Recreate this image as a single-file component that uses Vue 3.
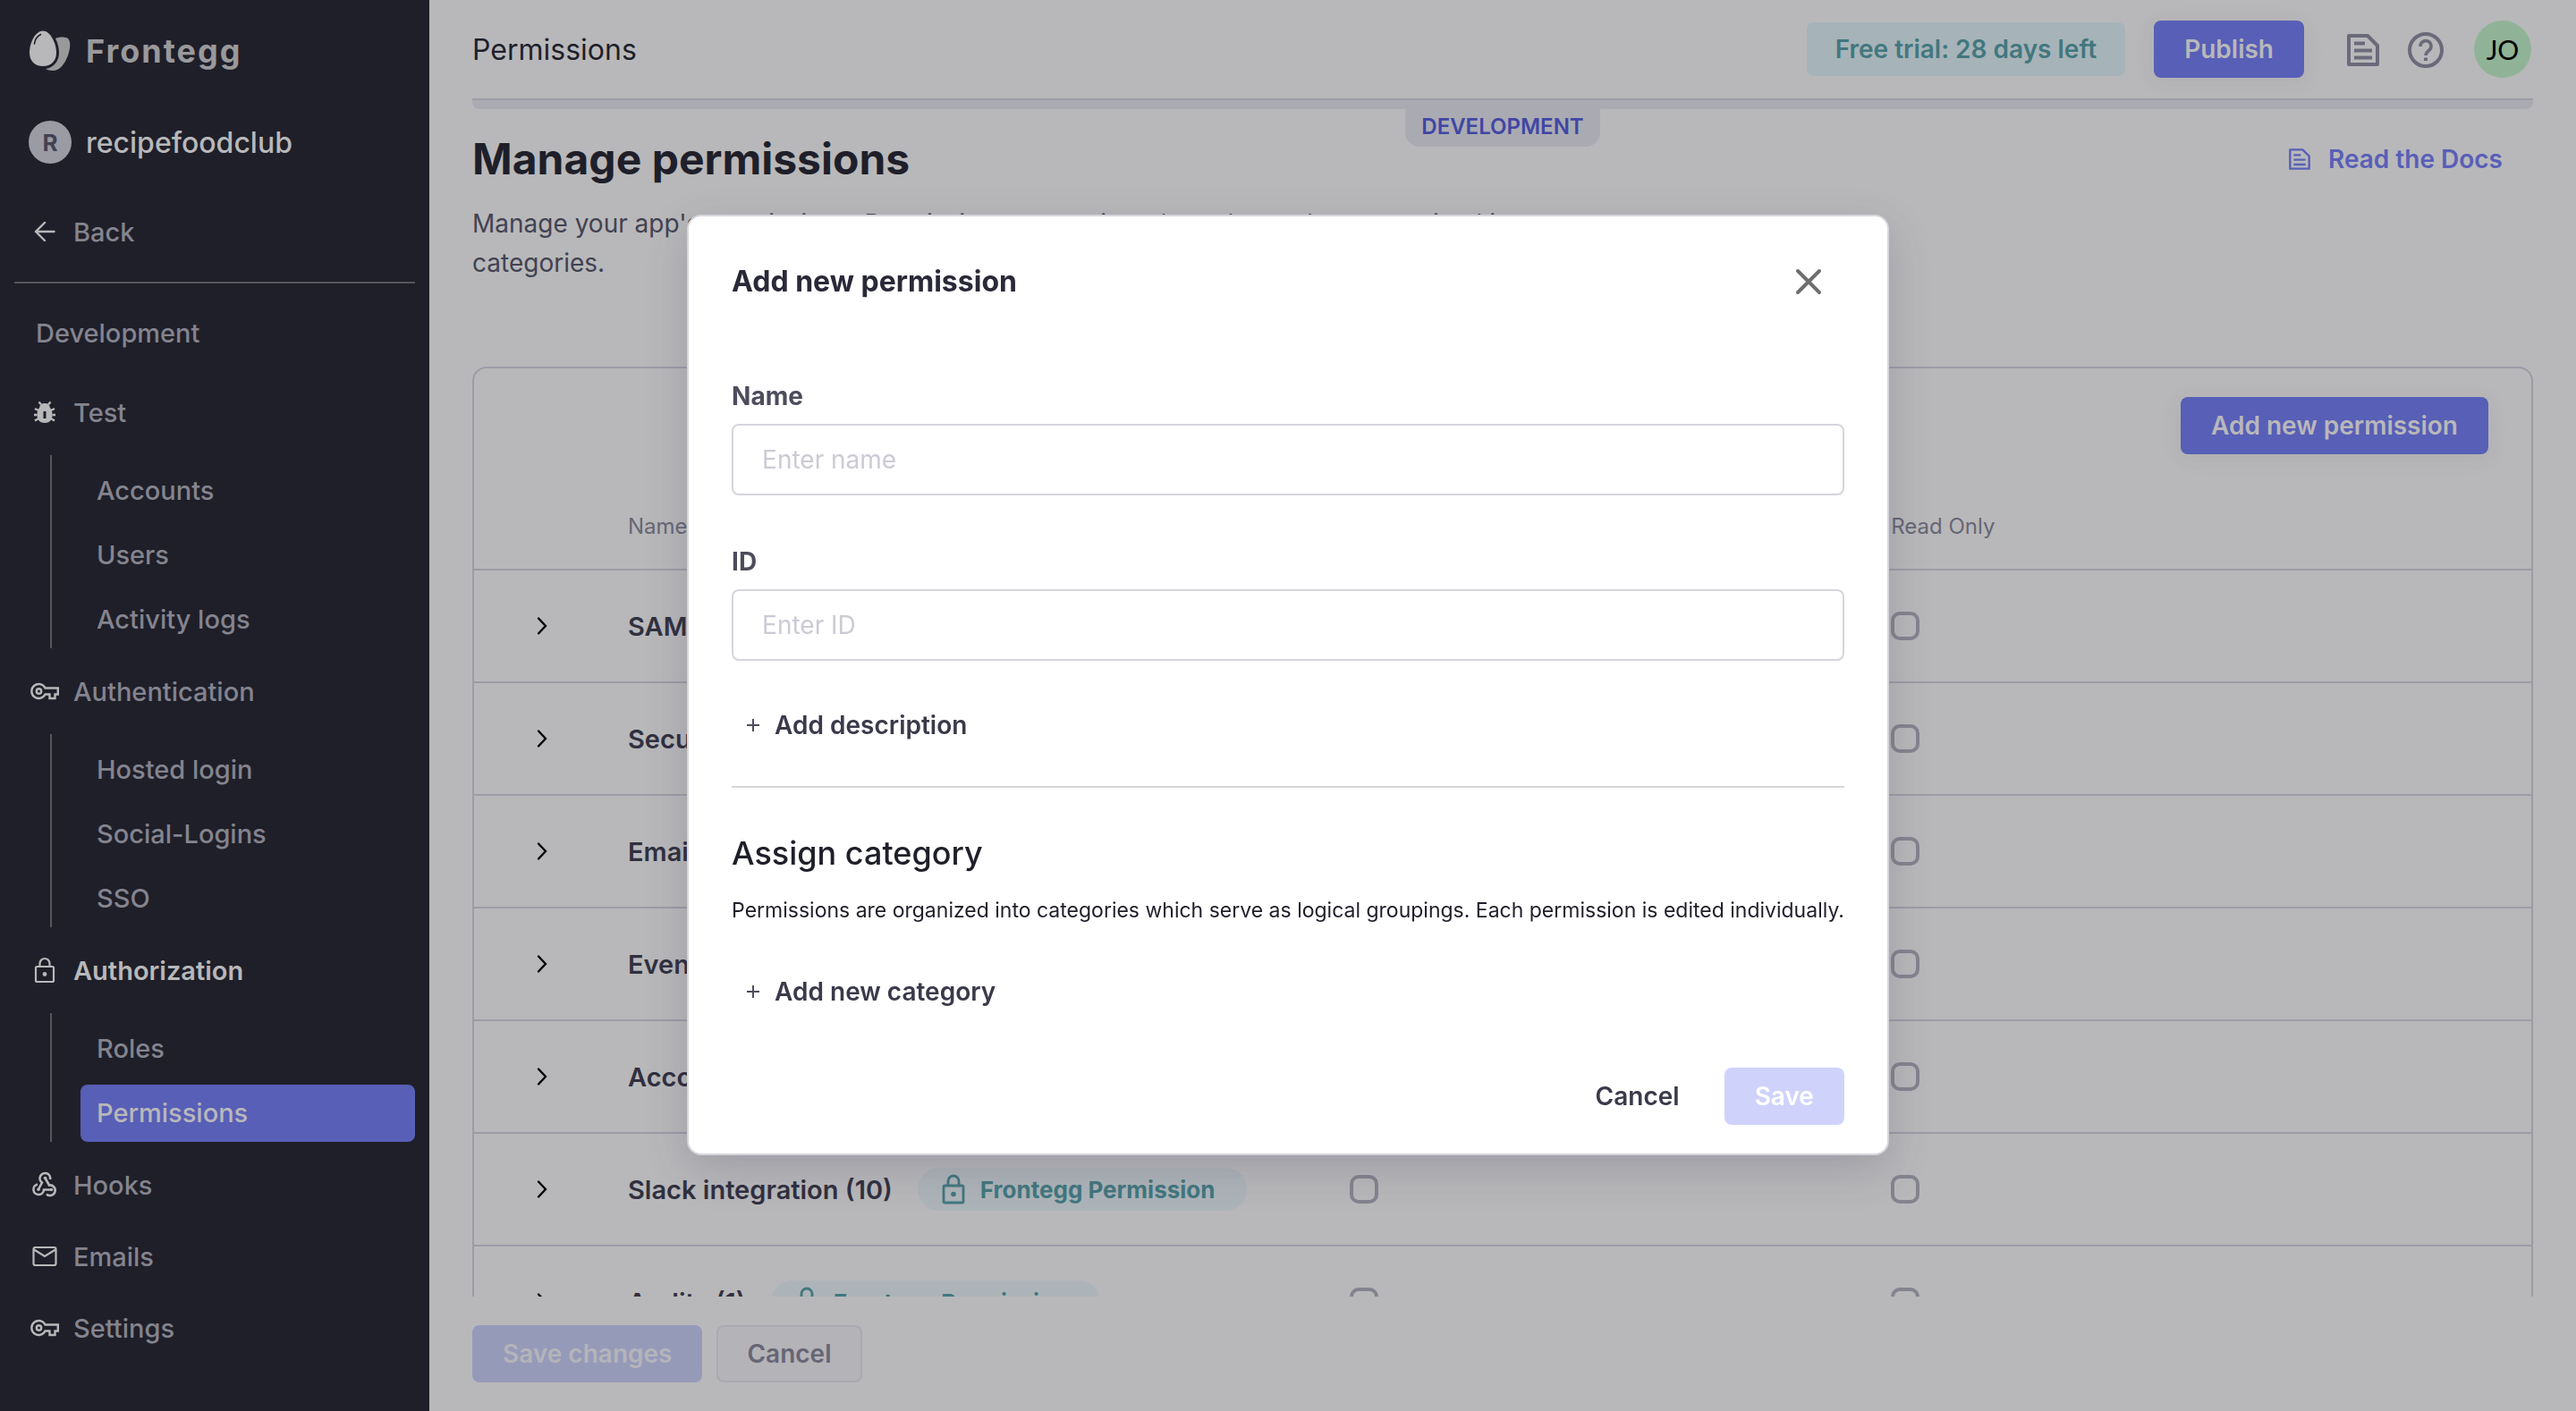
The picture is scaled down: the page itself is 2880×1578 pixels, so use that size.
<script setup>
    import { ref } from 'vue';

    const sections = [
        { name: 'Test', icon: 'bug', items: ['Accounts', 'Users', 'Activity logs'] },
        { name: 'Authentication', icon: 'key', items: ['Hosted login', 'Social-Logins', 'SSO'] },
        { name: 'Authorization', icon: 'lock', items: ['Roles', 'Permissions'] },
        { name: 'Hooks', icon: 'hook', items: [] },
        { name: 'Emails', icon: 'mail', items: [] },
        { name: 'Settings', icon: 'key', items: [] }
    ];

    const categories = ref([
        { name: 'SAML' },
        { name: 'Security' },
        { name: 'Emails' },
        { name: 'Events' },
        { name: 'Accounts' },
        { name: 'Slack integration (10)', locked: true },
        { name: 'Audits (1)', locked: true }
    ]);

    const activeSection = ref('Authorization');
    const activePage = ref('Permissions');
    const showModal = ref(true);
    const form = ref({ name: '', id: '' });
</script>

<template>
    <div class="app">
        <aside class="sidebar">
            <div class="logo">
                <svg width="48" height="46" viewBox="0 0 48 46">
                    <path d="M30 9C34 7 41 7 44 9C48 13 46 22 44 28C40 38 35 45 27 45C24 45 21 44 19 43C28 42 34 34 34 25C34 19 32 13 30 9Z" fill="#99999c" />
                    <path d="M16 0.500C24 0.500 31 14 31 25C31 34 25 40 16 40C7 40 1 34 1 25C1 13 8 0.500 16 0.500Z" fill="#b8b8ba" />
                    <path d="M6.500 15C7 10.500 9.500 6.500 13.500 4.500" fill="none" stroke="#1f1f29" stroke-width="1.600" stroke-linecap="round" />
                </svg>
                <span>Frontegg</span>
            </div>
            <div class="org">
                <span class="org-avatar">R</span>
                <span>recipefoodclub</span>
            </div>
            <a href="#" class="nav-link back">
                <svg class="nav-icon" viewBox="0 0 36 36"><path d="M28.500 18H8M18 8L8 18L18 28" fill="none" stroke="#b8b8ba" stroke-width="2.400" stroke-linecap="round" stroke-linejoin="round" /></svg>
                Back
            </a>
            <hr />
            <p class="environment">Development</p>

            <nav>
                <div v-for="section in sections" :key="section.name" class="section">
                    <a href="#" class="nav-link" :class="{ current: section.name === activeSection }">
                        <svg v-if="section.icon === 'bug'" class="nav-icon" viewBox="0 0 36 36" fill="none" stroke="#b8b8ba">
                            <path d="M18 8C21.500 8 23.500 10 24 13C26 15 26.500 18 26.500 21C26.500 27 23 30 18 30C13 30 9.500 27 9.500 21C9.500 18 10 15 12 13C12.500 10 14.500 8 18 8Z" fill="#b8b8ba" stroke="none" />
                            <path d="M14 9.500L11.500 6.500M22 9.500L24.500 6.500M11 16L7 14M9.500 21H6M11 25L7 27.500M25 16L29 14M26.500 21H30M25 25L29 27.500" stroke-width="2.400" />
                            <path d="M18 17V25" stroke="#1f1f29" stroke-width="3" />
                        </svg>
                        <svg v-else-if="section.icon === 'key'" class="nav-icon" viewBox="0 0 36 36" fill="none" stroke="#b8b8ba" stroke-width="2.400">
                            <path d="M18.500 14.500A8 8 0 1 0 18.500 21.500H23.500V26H29.500V21.500H32.800V14.500Z" />
                            <circle cx="11.500" cy="18" r="2.700" />
                        </svg>
                        <svg v-else-if="section.icon === 'lock'" class="nav-icon" viewBox="0 0 36 36" fill="none" stroke="#b8b8ba" stroke-width="2.200">
                            <rect x="8" y="14" width="20" height="17" rx="1.500" />
                            <path d="M12.500 14V10.500A5.500 5.500 0 0 1 23.500 10.500V14" />
                            <circle cx="18" cy="22.500" r="2.400" fill="#b8b8ba" stroke="none" />
                        </svg>
                        <svg v-else-if="section.icon === 'hook'" class="nav-icon" viewBox="0 0 36 36" fill="none" stroke="#b8b8ba" stroke-width="2.600">
                            <path d="M24 12A5.800 5.800 0 1 0 15 15.500L11 23" />
                            <path d="M18.500 10.500L23 18.500A5.800 5.800 0 1 1 20 28.500" />
                            <path d="M10 17.500A5.800 5.800 0 1 0 17 23.500H25.500" />
                            <circle cx="18.500" cy="10.500" r="1.800" fill="#b8b8ba" stroke="none" />
                            <circle cx="11" cy="23.300" r="1.800" fill="#b8b8ba" stroke="none" />
                            <circle cx="25.500" cy="23.500" r="1.800" fill="#b8b8ba" stroke="none" />
                        </svg>
                        <svg v-else class="nav-icon" viewBox="0 0 36 36" fill="none" stroke="#b8b8ba" stroke-width="2.200">
                            <rect x="5.500" y="8" width="25" height="20" rx="2" />
                            <path d="M6 10.500L18 18L30 10.500" />
                        </svg>
                        {{ section.name }}
                    </a>
                    <div v-if="section.items.length" class="children">
                        <a v-for="item in section.items" :key="item" href="#" :class="{ active: item === activePage }" @click.prevent="activePage = item">{{ item }}</a>
                    </div>
                </div>
            </nav>
        </aside>

        <main>
            <header class="topbar">
                <span class="page-name">Permissions</span>
                <span class="trial">Free trial: 28 days left</span>
                <button class="btn primary">Publish</button>
                <div class="tools">
                    <button class="icon-btn" aria-label="Docs">
                        <svg width="48" height="48" viewBox="0 0 48 48" fill="none" stroke="#6a6a7a" stroke-width="4">
                            <path d="M8 8H29L40 19V40H8Z" stroke-linejoin="round" />
                            <path d="M14 16.500H26M14 24.500H34M14 32.500H34" />
                        </svg>
                    </button>
                    <button class="icon-btn" aria-label="Help">
                        <svg width="48" height="48" viewBox="0 0 48 48" fill="none" stroke="#6a6a7a">
                            <circle cx="24" cy="24" r="18" stroke-width="4" />
                            <path d="M18 20A6 6 0 1 1 27.500 24.500C25 26.500 24 27.500 24 30" stroke-width="3.600" />
                            <path d="M24 32.500V36" stroke-width="4" />
                        </svg>
                    </button>
                </div>
                <span class="user">JO</span>
            </header>

            <div class="env-bar"><span class="env-tag">DEVELOPMENT</span></div>

            <div class="content">
                <div class="heading">
                    <h1>Manage permissions</h1>
                    <a href="#" class="docs">
                        <svg width="32" height="32" viewBox="0 0 48 48" fill="none" stroke="#585fb7" stroke-width="3.600">
                            <path d="M8 8H29L40 19V40H8Z" stroke-linejoin="round" />
                            <path d="M14 17H26M14 25H34M14 33H34" />
                        </svg>
                        Read the Docs
                    </a>
                </div>
                <p class="description">Manage your app's permissions. Permissions are assigned to roles and are organized into categories.</p>

                <section class="card">
                    <div class="card-top">
                        <button class="btn primary" @click="showModal = true">Add new permission</button>
                    </div>
                    <table>
                        <colgroup>
                            <col class="col-toggle" />
                            <col class="col-name" />
                            <col class="col-role" />
                            <col />
                        </colgroup>
                        <thead>
                            <tr>
                                <th></th>
                                <th>Name</th>
                                <th></th>
                                <th>Read Only</th>
                            </tr>
                        </thead>
                        <tbody>
                            <tr v-for="category in categories" :key="category.name">
                                <td class="toggle">
                                    <button class="icon-btn" :aria-label="category.name">
                                        <svg width="24" height="24" viewBox="0 0 24 24"><path d="M8 3.500L16 12L8 20.500" fill="none" stroke="#000" stroke-width="2.400" stroke-linecap="round" /></svg>
                                    </button>
                                </td>
                                <td>
                                    <div class="category">
                                        {{ category.name }}
                                        <span v-if="category.locked" class="pill">
                                            <svg width="28" height="36" viewBox="0 0 28 36" fill="none" stroke="#42777e" stroke-width="2.800">
                                                <rect x="3" y="14" width="22" height="19" rx="1.500" />
                                                <path d="M8 14V9A6 6 0 0 1 20 9V14" />
                                                <circle cx="14" cy="23.500" r="2.800" fill="#42777e" stroke="none" />
                                            </svg>
                                            Frontegg Permission
                                        </span>
                                    </div>
                                </td>
                                <td><input type="checkbox" :aria-label="category.name" /></td>
                                <td><input type="checkbox" :aria-label="category.name + ' Read Only'" /></td>
                            </tr>
                        </tbody>
                    </table>
                </section>
            </div>

            <footer>
                <button class="btn primary disabled">Save changes</button>
                <button class="btn plain">Cancel</button>
            </footer>
        </main>

        <div v-if="showModal" class="overlay">
            <form class="modal" role="dialog" aria-labelledby="modal-title" @submit.prevent>
                <div class="modal-head">
                    <h2 id="modal-title">Add new permission</h2>
                    <button type="button" class="icon-btn" aria-label="Close" @click="showModal = false">
                        <svg width="32" height="32" viewBox="0 0 32 32"><path d="M4 4L28 28M28 4L4 28" stroke="#6e6e6e" stroke-width="4" stroke-linecap="round" /></svg>
                    </button>
                </div>
                <div class="field">
                    <label for="name">Name</label>
                    <input id="name" v-model="form.name" type="text" placeholder="Enter name" />
                </div>
                <div class="field">
                    <label for="id">ID</label>
                    <input id="id" v-model="form.id" type="text" placeholder="Enter ID" />
                </div>
                <button type="button" class="add">
                    <svg width="16" height="16" viewBox="0 0 16 16"><path d="M8 1V15M1 8H15" stroke="#4c4c5d" stroke-width="2" /></svg>
                    Add description
                </button>
                <hr />
                <h3>Assign category</h3>
                <p class="hint">Permissions are organized into categories which serve as logical groupings. Each permission is edited individually.</p>
                <button type="button" class="add">
                    <svg width="16" height="16" viewBox="0 0 16 16"><path d="M8 1V15M1 8H15" stroke="#4c4c5d" stroke-width="2" /></svg>
                    Add new category
                </button>
                <div class="modal-actions">
                    <button type="button" class="btn text" @click="showModal = false">Cancel</button>
                    <button type="submit" class="btn save">Save</button>
                </div>
            </form>
        </div>
    </div>
</template>

<style>
    body{
        margin: 0;
        background-color: #b8b8ba;
    }
</style>

<style scoped>

    *{
        box-sizing: border-box;
        margin: 0;
    }

    .app{
        display: flex;
        height: 100vh;
        overflow: hidden;
        font-family: Inter, "Noto Sans", sans-serif;
        font-size: 28px;
        color: #30303f;
    }

    a{
        color: inherit;
        text-decoration: none;
    }

    button, input{
        font: inherit;
        color: inherit;
    }

    svg{
        display: block;
        flex: none;
    }

    .sidebar{
        flex: none;
        width: 480px;
        padding: 34px 16px;
        background-color: #1f1f29;
        color: #84848f;
        font-size: 29px;
        font-weight: 500;
    }

    .logo{
        display: flex;
        align-items: center;
        gap: 16px;
        height: 46px;
        padding-left: 16px;
        font-size: 36px;
        font-weight: 700;
        letter-spacing: 2px;
        color: #99999c;
    }

    .org{
        display: flex;
        align-items: center;
        gap: 16px;
        height: 48px;
        margin-top: 55px;
        padding-left: 16px;
        font-size: 32px;
        color: #b8b8ba;
    }

    .org-avatar{
        display: flex;
        align-items: center;
        justify-content: center;
        width: 48px;
        height: 48px;
        border-radius: 50%;
        background-color: #9b9ba4;
        color: #424252;
        font-size: 26px;
        font-weight: 700;
    }

    .nav-link{
        display: flex;
        align-items: center;
        gap: 14px;
        height: 64px;
        padding-left: 16px;
    }

    .nav-icon{
        width: 36px;
        height: 36px;
    }

    .back{
        margin-top: 44px;
    }

    .sidebar hr{
        height: 2px;
        margin-top: 24px;
        border: 0;
        background-color: #55555c;
    }

    .environment{
        margin: 24px 0;
        padding-left: 24px;
        line-height: 64px;
    }

    nav{
        display: flex;
        flex-direction: column;
        gap: 16px;
    }

    .current{
        color: #b8b8ba;
        font-weight: 600;
    }

    .children{
        margin: 16px 0 0 40px;
        padding-left: 32px;
        border-left: 2px solid #55555c;
    }

    .children a{
        display: block;
        padding-left: 18px;
        border-radius: 8px;
        border-top: 8px solid transparent;
        background-clip: padding-box;
        line-height: 64px;
    }

    .children .active{
        margin-top: 8px;
        border-top: 0;
        background-color: #585fb7;
        color: #b8b8ba;
    }

    main{
        flex: 1;
        display: flex;
        flex-direction: column;
        min-width: 0;
        padding: 0 48px;
        background-color: #b8b8ba;
    }

    .topbar{
        flex: none;
        display: flex;
        align-items: center;
        height: 110px;
        padding-right: 2px;
    }

    .page-name{
        flex: 1;
        font-size: 32px;
        color: #1f1f2a;
    }

    .trial{
        margin-right: 32px;
        padding: 0 32px;
        border-radius: 8px;
        background-color: #a6b3b8;
        color: #42777e;
        font-weight: 600;
        line-height: 60px;
    }

    .btn{
        height: 64px;
        padding: 0 32px;
        border: 2px solid transparent;
        border-radius: 8px;
        font-weight: 600;
        cursor: pointer;
    }

    .primary{
        border: 0;
        padding: 0 34px;
        background-color: #585fb7;
        color: #b8b8ba;
        box-shadow: 0 4px 24px rgba(60, 60, 80, 0.08);
    }

    .disabled{
        background-color: #969ab9;
        color: #b4b4ba;
        box-shadow: none;
    }

    .plain{
        border-color: #a9a9b2;
        background-color: #b4b3b8;
        color: #666674;
    }

    .tools{
        display: flex;
        gap: 22px;
        margin: 2px 30px 0 42px;
    }

    .icon-btn{
        display: block;
        padding: 0;
        border: 0;
        background: none;
        cursor: pointer;
    }

    .user{
        width: 64px;
        border-radius: 50%;
        background-color: #90b398;
        color: #000;
        font-family: Lato, sans-serif;
        font-size: 30px;
        line-height: 64px;
        text-align: center;
    }

    .env-bar{
        flex: none;
        display: flex;
        justify-content: center;
        height: 12px;
        border-top: 2px solid #9c9ca6;
        border-radius: 0 0 8px 8px;
        background-color: #aaabb2;
    }

    .env-tag{
        height: 52px;
        padding: 0 18px;
        border-radius: 0 0 16px 16px;
        background-color: #aaabb2;
        color: #4146a4;
        font-size: 24px;
        font-weight: 600;
        line-height: 60px;
    }

    .content{
        flex: 1;
        min-height: 0;
        overflow: hidden;
    }

    .heading{
        display: flex;
        align-items: center;
        justify-content: space-between;
        margin-top: 24px;
        padding-right: 34px;
    }

    h1{
        font-size: 48px;
        font-weight: 700;
        line-height: 64px;
        color: #1f1f2a;
    }

    .docs{
        display: flex;
        align-items: center;
        gap: 16px;
        color: #585fb7;
        font-weight: 600;
    }

    .description{
        max-width: 1200px;
        margin-top: 18px;
        line-height: 44px;
        color: #424252;
    }

    .card{
        margin-top: 94px;
        border: 2px solid #9c9ca6;
        border-radius: 16px;
    }

    .card-top{
        display: flex;
        justify-content: flex-end;
        padding: 32px 48px;
    }

    table{
        width: 100%;
        table-layout: fixed;
        border-collapse: collapse;
    }

    .col-toggle{
        width: 172px;
    }

    .col-name{
        width: 35.1%;
    }

    .col-role{
        width: 26.3%;
    }

    th, td{
        padding: 0;
        border-bottom: 2px solid #9c9ca6;
        text-align: left;
    }

    th{
        height: 97px;
        color: #666674;
        font-size: 24px;
        font-weight: 400;
    }

    td{
        height: 126px;
    }

    .toggle .icon-btn{
        margin-left: 64px;
    }

    .category{
        display: flex;
        align-items: center;
        gap: 28px;
        font-size: 29px;
        font-weight: 600;
        white-space: nowrap;
    }

    .pill{
        display: flex;
        align-items: center;
        gap: 16px;
        height: 48px;
        padding: 0 36px 0 26px;
        border-radius: 24px;
        background-color: #adb4b9;
        color: #42777e;
        font-size: 26px;
        font-weight: 700;
    }

    td input{
        display: block;
        appearance: none;
        width: 32px;
        height: 32px;
        border: 4px solid #84848f;
        border-radius: 10px;
    }

    footer{
        flex: none;
        display: flex;
        gap: 16px;
        padding: 32px 0;
    }

    .overlay{
        position: fixed;
        inset: 0;
        display: flex;
        align-items: flex-start;
        justify-content: center;
        padding-top: 240px;
    }

    .modal{
        padding: 48px 48px 32px;
        border: 2px solid #d5d5dc;
        border-radius: 16px;
        background-color: #fff;
        box-shadow: 0 16px 48px rgba(60, 50, 80, 0.2);
    }

    .modal-head{
        display: flex;
        align-items: center;
        justify-content: space-between;
        padding-right: 24px;
        margin-bottom: 81px;
    }

    h2{
        font-size: 32px;
        font-weight: 700;
        line-height: 50px;
        color: #292938;
    }

    .field{
        margin-bottom: 52px;
    }

    label{
        display: block;
        margin-bottom: 8px;
        color: #4c4c5d;
        font-weight: 700;
        line-height: 45px;
    }

    .field input{
        width: 100%;
        height: 80px;
        padding: 0 32px;
        border: 2px solid #d5d5dc;
        border-radius: 8px;
        background-color: #fff;
    }

    .field input::placeholder{
        color: #cbcbd5;
    }

    .add{
        display: flex;
        align-items: center;
        gap: 16px;
        height: 40px;
        padding: 0 16px;
        border: 0;
        background: none;
        color: #3a3a4b;
        font-weight: 600;
        cursor: pointer;
    }

    .modal hr{
        height: 2px;
        margin: 48px 0;
        border: 0;
        background-color: #d5d5dc;
    }

    h3{
        font-size: 36px;
        font-weight: 500;
        line-height: 50px;
        color: #1f1f2a;
    }

    .hint{
        margin: 21px 0 53px;
        color: #1f1f2a;
        font-size: 23px;
        line-height: 36px;
    }

    .modal-actions{
        display: flex;
        justify-content: flex-end;
        gap: 18px;
        margin-top: 65px;
    }

    .text{
        border: 0;
        background: none;
        color: #3a3a4b;
    }

    .save{
        background-color: #cfd3fb;
        color: #fff;
    }

</style>
